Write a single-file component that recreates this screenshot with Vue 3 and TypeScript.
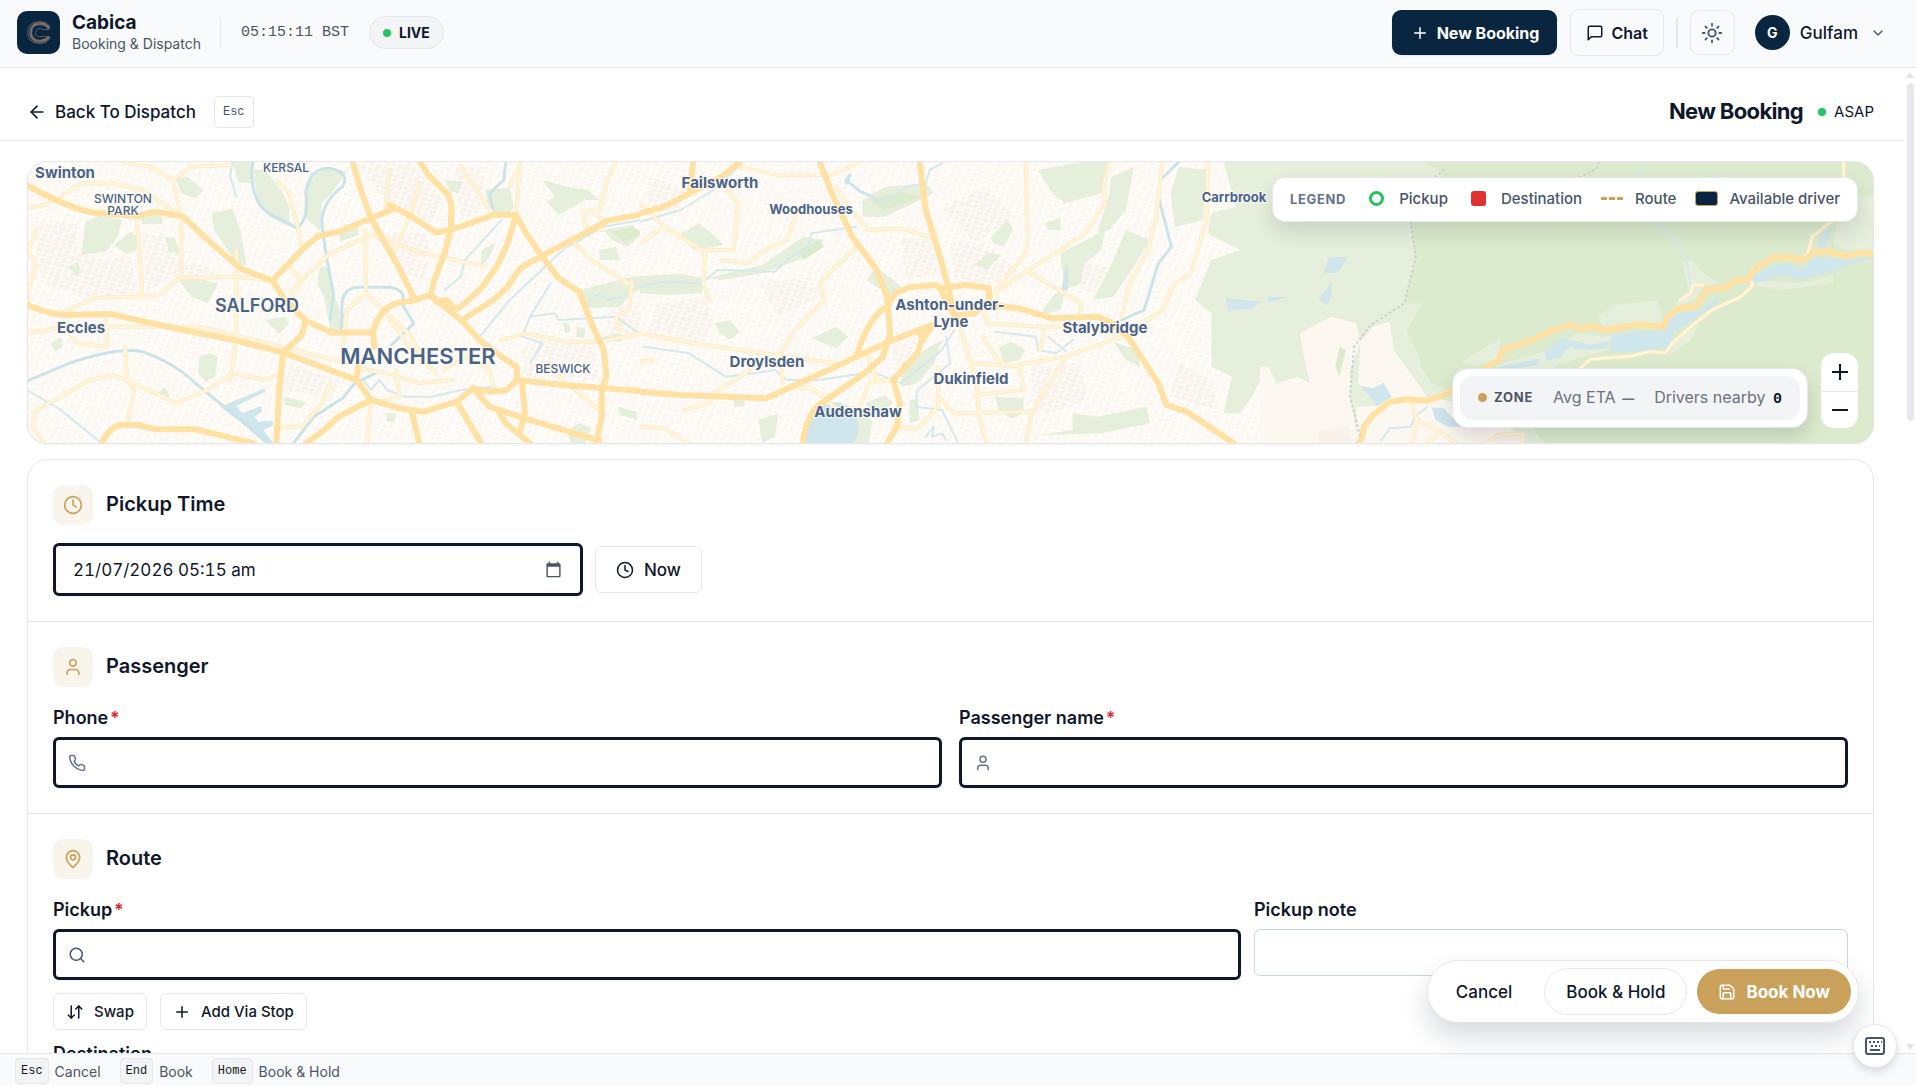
<script setup lang="ts">
import { ref } from 'vue'

interface Tile {
  x: number
  width: number
  land: string
  fields: string[]
  hills: string[]
  urban: string[]
  cream: string[]
  lakes: string[]
  rivers: string[]
  lanes: string[]
  minor: string[]
  major: string[]
  trails: string[]
}

interface Label {
  text: string
  x: number
  y: number
  size: 'xs' | 'sm' | 'md' | 'lg' | 'xl'
}

const pickupTime = ref('21/07/2026 05:15 am')
const phone = ref('')
const passenger = ref('')
const pickup = ref('')
const pickupNote = ref('')

const icons: Record<string, string[]> = {
  plus: ['M5 12h14', 'M12 5v14'],
  chat: ['M21 15a2 2 0 0 1-2 2H7l-4 4V5a2 2 0 0 1 2-2h14a2 2 0 0 1 2 2z'],
  sun: [
    'M12 8a4 4 0 1 0 0 8 4 4 0 0 0 0-8z',
    'M12 2v2', 'M12 20v2', 'M4.93 4.93l1.41 1.41', 'M17.66 17.66l1.41 1.41',
    'M2 12h2', 'M20 12h2', 'M6.34 17.66l-1.41 1.41', 'M19.07 4.93l-1.41 1.41'
  ],
  chevron: ['M6 9l6 6 6-6'],
  back: ['M12 19l-7-7 7-7', 'M19 12H5'],
  clock: ['M12 2a10 10 0 1 0 0 20 10 10 0 0 0 0-20z', 'M12 6v6l4 2'],
  user: ['M19 21v-2a4 4 0 0 0-4-4H9a4 4 0 0 0-4 4v2', 'M12 3a4 4 0 1 0 0 8 4 4 0 0 0 0-8z'],
  pin: [
    'M20 10c0 4.993-5.539 10.193-7.399 11.799a1 1 0 0 1-1.202 0C9.539 20.193 4 14.993 4 10a8 8 0 0 1 16 0',
    'M12 7a3 3 0 1 0 0 6 3 3 0 0 0 0-6z'
  ],
  phone: ['M22 16.92v3a2 2 0 0 1-2.18 2 19.79 19.79 0 0 1-8.63-3.07 19.5 19.5 0 0 1-6-6 19.79 19.79 0 0 1-3.07-8.67A2 2 0 0 1 4.11 2h3a2 2 0 0 1 2 1.72 12.84 12.84 0 0 0 .7 2.81 2 2 0 0 1-.45 2.11L8.09 9.91a16 16 0 0 0 6 6l1.27-1.27a2 2 0 0 1 2.11-.45 12.84 12.84 0 0 0 2.81.7A2 2 0 0 1 22 16.92z'],
  search: ['M11 3a8 8 0 1 0 0 16 8 8 0 0 0 0-16z', 'M21 21l-4.3-4.3'],
  swap: ['M3 16l4 4 4-4', 'M7 20V4', 'M21 8l-4-4-4 4', 'M17 4v16'],
  save: [
    'M15.2 3a2 2 0 0 1 1.4.6l3.8 3.8a2 2 0 0 1 .6 1.4V19a2 2 0 0 1-2 2H5a2 2 0 0 1-2-2V5a2 2 0 0 1 2-2z',
    'M17 21v-7a1 1 0 0 0-1-1H8a1 1 0 0 0-1 1v7',
    'M7 3v4a1 1 0 0 0 1 1h7'
  ]
}

const tiles: Tile[] = [
  {
    x: 20,
    width: 640,
    land: 'M0 0H1568V930H0Z',
    fields: [
      'M160 215L200 195 250 210 240 260 210 305 150 315Z',
      'M230 285L270 245 290 260 285 300 260 312Z',
      'M290 195L345 190 350 222 300 222Z',
      'M355 260L380 265 392 310 365 305Z',
      'M380 85L410 80 450 120 430 145 395 130Z',
      'M470 190L520 175 540 240 555 345 535 345 475 240Z',
      'M520 36L570 36 565 100 535 95Z',
      'M572 60L600 60 640 120 660 170 660 230 610 200 580 140Z',
      'M700 120Q715 55 760 50L800 65 770 120 740 160 735 240 695 200Z',
      'M735 350L755 350 768 430 790 500 785 540 760 540 745 440 728 400Z',
      'M780 250L830 232 828 255 785 275Z',
      'M388 390L430 385 485 400 460 460 420 440Z',
      'M600 510L650 500 660 520 635 550Z',
      'M120 350L140 335 150 365 138 380Z',
      'M75 580L100 560 105 590 85 605Z',
      'M440 620L465 610 485 620 478 680 455 695 436 670Z',
      'M645 740L700 755 690 775 650 765Z',
      'M1140 120L1200 112 1210 170 1200 190 1150 188Z',
      'M1280 90L1340 110 1390 120 1420 150 1385 150 1320 195 1290 155 1310 140Z',
      'M1430 240L1500 225 1525 250 1490 290 1450 270Z',
      'M1420 300L1460 290 1470 330 1420 330Z',
      'M1370 420L1500 380 1568 380 1568 410 1500 425 1470 470 1390 475Z',
      'M1400 570L1460 550 1480 560 1470 575Z',
      'M1465 770L1510 785 1512 810 1470 795Z',
      'M1370 820L1400 835 1385 880 1350 880 1340 840Z',
      'M1330 520L1345 520 1350 545 1335 548Z',
      'M1365 530L1385 535 1383 565 1362 560Z',
      'M1130 300L1165 280 1150 320 1130 350Z',
      'M895 790L920 790 918 815 900 815Z',
      'M340 730L352 712 368 735 350 752Z',
      'M1040 90L1085 95 1075 130 1055 125Z'
    ],
    hills: ['M1450 245L1500 232 1525 250 1480 275Z'],
    urban: [
      'M40 210L140 220 140 310 200 330 270 320 290 430 150 440 60 400 40 330Z',
      'M300 250L350 260 400 320 490 370 380 385 310 420Z',
      'M860 250L1000 250 1000 400 940 370Z',
      'M1280 560L1400 580 1420 690 1230 680 1230 600Z',
      'M820 40L960 40 1040 150 1000 220 900 160Z',
      'M1060 50L1140 50 1130 180 1080 210Z',
      'M1440 470L1560 450 1568 540 1440 560Z',
      'M650 640L800 690 760 740 650 720Z'
    ],
    cream: [],
    lakes: ['M490 770L600 715 600 726 530 768 545 790 590 768 594 784 575 800 583 815 620 812 620 826 596 840 622 880 600 880 540 815Z'],
    rivers: [
      'M570 36Q560 150 610 190L680 235Q710 200 700 130Q710 50 760 55Q810 70 790 110Q735 160 740 230L752 330 768 430 760 510',
      'M785 540L790 500Q780 412 830 412L910 412Q950 425 935 460L965 520 910 585',
      'M0 702L120 640Q240 590 300 605Q380 640 430 700L510 780 612 880',
      'M670 880L720 800 790 745 820 700 870 670',
      'M1190 36L1185 90 1150 130 1160 190'
    ],
    lanes: [
      'M0 708L100 780 200 880',
      'M520 36L515 80 530 140',
      'M1120 570L1200 450 1330 300 1430 230 1568 200',
      'M1250 500L1310 490 1320 510 1460 500 1568 595',
      'M1040 420L1080 380 1090 330 1120 290 1180 210',
      'M840 690L860 720 880 690 900 720 940 740 1010 740 1080 720 1160 710',
      'M1395 450L1420 430 1440 450 1480 440 1500 410 1568 400',
      'M1300 400L1250 500 1230 560 1280 580 1250 640'
    ],
    minor: [
      'M0 175Q70 170 100 140L150 100 230 100 300 120 390 195',
      'M250 36L320 50 375 90 395 200 395 380',
      'M375 90L420 50 515 45',
      'M285 200L295 340 300 440 340 435 390 385 530 380 618 392',
      'M20 480L20 420 40 350 20 300 40 240',
      'M100 490L180 445 240 440 300 440',
      'M210 492L215 590 140 580 110 530 0 555',
      'M215 530L440 530 640 590 800 640',
      'M258 590L262 690 280 720 262 820',
      'M40 780L100 740 170 690 230 675 280 700 350 740 380 760 460 720 520 670 600 690 640 670',
      'M40 780L30 830 60 880',
      'M530 300L530 570 515 690',
      'M845 240L848 430 800 480 790 610',
      'M848 430L900 490 960 560 990 640',
      'M655 345L690 390 665 430 680 500',
      'M690 390L760 310 870 250',
      'M630 90L660 130 680 230 690 300',
      'M905 60L895 180',
      'M870 260L990 310 1140 350',
      'M1200 110L1225 40 M1225 60L1215 195',
      'M1080 50L1120 120 1160 195',
      'M920 300L950 210 980 100',
      'M1350 270L1400 330 1490 400',
      'M1430 212L1400 180 1380 190 1385 230 1430 240',
      'M1180 570L1240 550 1340 575 1420 575 1568 540',
      'M1480 400L1500 400 1490 480 1460 500 1470 540',
      'M1040 660L1090 620 1150 660 1160 710',
      'M900 500L960 600 1020 670',
      'M920 660L930 740 880 755',
      'M830 655L900 670 980 700 1060 690',
      'M640 830L690 830 740 760 760 700',
      'M1430 790L1330 690 1290 640',
      'M860 750L850 880',
      'M1420 180L1440 90 1460 36'
    ],
    major: [
      'M0 95Q140 190 200 190L290 198 330 185 400 200 460 270 540 355 618 392 650 450 700 512 765 548 860 547',
      'M0 455Q60 490 110 495L220 492 400 540 530 572 645 608 820 688',
      'M200 880Q220 830 245 825L290 825 330 838 430 838 575 880',
      'M618 392L655 345 690 300 730 258 780 245 860 205 910 180',
      'M905 165L960 200 1020 248 1055 240 1160 195 1215 195 1240 250 1278 318 1320 385 1370 425 1400 520 1430 600 1437 680 1425 720 1425 800 1412 880',
      'M815 36L835 120 860 205 925 345 968 450',
      'M980 36L1000 75 1050 135 1057 170 1055 240 1040 310 1015 390 1005 440',
      'M1568 183L1440 212 1360 265 1278 318 1225 355 1195 410 1160 450 1090 505',
      'M1215 195L1195 280 1170 345 1130 415 1085 465 1065 480',
      'M968 450L1005 435 1040 470 1085 515 1130 575 1180 620 1217 650 1218 690 1190 722 1150 725 1110 715 1070 755 990 785 930 775 860 750 825 690 828 650',
      'M968 450L920 460Q880 480 865 545L868 590',
      'M1020 455L1045 450 1065 480',
      'M700 512L690 555 645 608 635 720 628 880',
      'M860 750L780 800 740 845 700 880',
      'M960 785L978 880',
      'M1070 755L1130 880',
      'M1110 715L1150 770 1235 805 1420 872',
      'M1217 690L1330 705 1425 713 1568 728',
      'M1230 695L1237 790 1225 840',
      'M1175 790L1190 820 1250 880'
    ],
    trails: []
  },
  {
    x: 640,
    width: 640,
    land: 'M0 0H1568V930H0Z',
    fields: [
      'M0 378L100 372 160 385 150 430 60 435 0 430Z',
      'M160 385L300 345 400 260 450 270 410 320 300 370 200 390Z',
      'M545 150L600 110 700 100 720 130 600 200 545 200Z',
      'M100 250L145 220 185 260 205 285 130 300Z',
      'M975 60L1080 36 1150 36 1130 130 1040 160 1010 130Z',
      'M1155 80L1210 50 1190 180 1150 240 1120 250 1150 130Z',
      'M1030 310L1140 240 1130 300 1090 340 1080 400 1040 420Z',
      'M1190 240L1250 270 1210 350 1160 440 1110 450 1160 330Z',
      'M1320 50L1390 60 1380 210 1310 230 1300 130Z',
      'M1430 36L1568 36 1568 640 1520 690 1500 740 1470 790 1430 790 1450 680 1400 650 1400 490 1360 450 1400 330 1470 300 1390 250 1400 190 1460 170Z',
      'M555 390L580 350 640 410 620 450 605 430Z',
      'M860 260L900 210 915 240 890 290 865 280Z',
      'M820 345L850 310 885 315 850 360Z',
      'M980 495L1010 440 1045 400 1030 480Z',
      'M880 590L910 575 945 600 930 630 890 640Z',
      'M870 740L940 745 940 790 910 805 880 785Z',
      'M980 855L1060 840 1060 790 1120 800 1240 770 1250 820 1130 850Z',
      'M550 760L600 735 620 760 580 795Z',
      'M535 790L570 810 560 880 520 880Z',
      'M1160 575L1220 600 1225 650 1190 630Z',
      'M185 520L220 510 245 545 220 570 195 550Z',
      'M420 565L480 530 510 560 480 595Z',
      'M640 640L740 570 720 640 680 700 640 710Z',
      'M290 810L340 790 330 860 300 880Z',
      'M990 220L1030 205 1030 240 1000 240Z',
      'M230 745L258 740 255 770 230 770Z',
      'M660 750L680 750 685 810 660 820Z'
    ],
    hills: ['M560 150L640 125 690 140 600 180Z', 'M390 300L440 270 450 290 400 330Z'],
    urban: [
      'M40 460L160 440 180 520 160 580 20 540Z',
      'M640 260L720 270 730 370 650 390Z',
      'M760 280L850 280 930 370 860 400 770 390Z',
      'M960 650L1080 640 1100 750 1000 790 960 760Z',
      'M1320 640L1400 690 1420 780 1300 740Z',
      'M740 170L850 110 920 200 820 280Z',
      'M20 80L120 120 90 200 20 170Z',
      'M290 400L420 380 440 440 340 500Z',
      'M620 590L680 560 660 620 620 660Z',
      'M1090 340L1150 350 1110 430 1080 420Z'
    ],
    cream: [],
    lakes: [
      'M450 760Q510 745 530 800Q545 850 520 880L400 880Q410 790 450 760Z',
      'M1435 445L1522 455 1500 475 1440 482Z',
      'M1535 440L1568 435 1568 458Z',
      'M1045 340L1050 380 1048 420 1032 420Z'
    ],
    rivers: [
      'M1320 36L1275 90 1270 140 1302 290 1270 340 1235 480 1180 510',
      'M505 100L515 75 505 90 540 125 570 140'
    ],
    lanes: [
      'M0 410L60 395 150 400 190 360 330 365 370 320 410 300 420 250 530 230',
      'M10 590L120 610 210 680 280 670 330 660 360 690 440 690 570 665 640 700 740 600 770 540',
      'M545 130L600 155 650 110 700 100 710 60 740 40',
      'M750 560L760 640 680 720 675 770 740 780 780 880',
      'M870 545L970 560 975 600 1020 610 1060 570',
      'M1000 560L1045 605',
      'M245 45L180 120 100 180 0 215',
      'M700 860L720 830 715 860 740 850 750 870'
    ],
    minor: [
      'M0 550L130 580 300 610 480 640',
      'M1150 36L1135 110 1140 160 1090 250 1030 300 940 370 860 440',
      'M1280 36L1265 200 1245 300 1200 400 1180 500',
      'M1390 36L1390 200 1350 370 1310 400 1280 480 1180 560 1040 620',
      'M945 36L950 300 860 440',
      'M945 360L1080 460 1080 500',
      'M0 160L60 230 150 300 230 300 240 160 200 100',
      'M60 230L0 280',
      'M160 300L155 400 170 450',
      'M200 330L260 340 320 290 360 270 390 170',
      'M240 50L340 76 470 75 540 36',
      'M480 110L530 200 560 240 640 235 720 265',
      'M530 290L480 350 440 400 450 450 380 540 345 610 350 700',
      'M780 510L800 600 825 700 830 800 850 880',
      'M555 610L580 690 620 690',
      'M730 740L770 790 960 785',
      'M1040 625L960 790 945 880',
      'M840 470L850 520 980 530 1080 530 1190 560',
      'M820 640L930 650 940 720 820 735',
      'M840 560L870 620 900 650 1040 620',
      'M0 635L30 630M0 830L60 835 120 880',
      'M110 780L170 760 180 730 270 660 290 620',
      'M370 715L420 715 450 740',
      'M450 750L490 780 540 770 560 700 610 690',
      'M620 830L680 835 730 770 730 650',
      'M990 540L980 600'
    ],
    major: [
      'M0 190L60 170 130 125 200 80 245 36',
      'M130 36L122 125',
      'M440 36L470 130 520 260 580 360 605 440 613 550 595 620 550 670 450 755Q410 780 398 880',
      'M685 36L700 180 730 300 755 410 770 495',
      'M0 725L100 735 310 745 380 705 480 650 530 620 610 575 715 525',
      'M530 620Q560 500 605 470L625 430 660 412 725 405 735 415 800 405 855 415 855 450 820 490 770 497 745 440 735 412',
      'M855 465L930 475 1010 505 1120 500 1150 515 1195 560 1270 700 1290 765 1340 785 1455 880',
      'M715 530L690 570 680 610 620 690 637 760 630 830 605 880',
      'M680 540L695 570'
    ],
    trails: []
  },
  {
    x: 1260,
    width: 656,
    land: '',
    fields: [
      'M0 36L390 36 440 70 400 130 360 215 372 320 345 460 390 460 350 540 410 700 470 730 650 830 680 880 0 880Z',
      'M480 640L540 590 575 570 570 620 520 650Z',
      'M580 640L690 600 760 550 840 560 830 600 720 640 700 655 560 655Z',
      'M805 500L850 465 950 450 960 490 960 520 820 530Z',
      'M1010 340L1030 330 1060 370 1100 400 1060 410 1040 450 990 470 1025 420Z',
      'M1180 390L1290 400 1370 375 1370 400 1250 420 1190 410Z',
      'M1395 120L1440 140 1468 140 1468 300 1400 300 1370 280Z',
      'M990 570L1050 520 1030 570 975 620Z'
    ],
    hills: ['M190 590L205 600 190 680 180 650Z', 'M380 560L420 490 455 690 410 695 385 650Z'],
    urban: ['M140 840L210 830 220 880 140 880Z', 'M560 850L630 850 630 880 560 880Z'],
    cream: [
      'M0 650L20 650 40 700 90 680 120 700 110 650 95 550 170 500 230 520 240 575 215 660 215 740 235 880 0 880Z',
      'M240 575L270 530 310 515 320 600 400 740 480 760 620 850 630 880 235 880 230 770 280 768 235 700Z'
    ],
    lakes: [
      'M840 556L900 545 965 540 990 495 1050 480 1100 437 1095 460 1045 500 990 545 980 590 920 605 838 605Z',
      'M680 605L720 565 760 575 790 585 835 572 830 595 770 600 740 590 715 625 685 632Z',
      'M1180 375L1230 345 1270 338 1290 365 1320 322 1400 330 1466 320 1340 375 1290 388 1250 375 1175 402Z',
      'M560 655L590 645 670 625 660 645 600 658Z',
      'M165 322L212 320 185 368 150 370Z',
      'M170 398L172 435 158 468 140 445Z',
      'M20 440L68 440 20 458Z',
      'M240 708L270 715 295 698 315 740 280 768Z',
      'M410 772L440 775 480 830 450 830 420 810Z',
      'M1340 255L1370 225 1350 295 1335 295Z'
    ],
    rivers: [],
    lanes: ['M945 218L990 270 1020 330 1030 410', 'M925 36L905 76', 'M400 770L370 800 360 830 310 835 290 870'],
    minor: [
      'M1180 355L1170 385 1178 405 1150 440 1080 480 1040 520 985 580 970 608 930 605 890 618 790 628 765 655',
      'M1395 36L1395 85',
      'M1365 215L1320 260 1310 310 1298 330',
      'M1060 405L1035 405 1030 430 1005 450',
      'M360 750L375 810 430 845 470 880',
      'M375 810L365 880',
      'M540 880L570 855 630 850 625 880',
      'M400 880L430 845'
    ],
    major: [
      'M235 880Q245 870 248 830L270 795 310 755 350 748 400 752 440 735 470 710 530 660 570 630 580 600 640 575 700 540 740 525 770 535 795 528 825 540 900 523 965 530 975 500 1000 475 1040 470 1070 418 1110 415 1140 390 1165 390 1190 350 1230 322 1260 322 1300 330 1325 305 1360 305 1400 318 1440 308 1480 315'
    ],
    trails: [
      'M360 215L372 320 345 460 265 525 225 590 215 740 240 860',
      'M810 36L805 55 760 85',
      'M440 60L420 80'
    ]
  }
]

const labels: Label[] = [
  { text: 'Swinton', x: 65, y: 178, size: 'md' },
  { text: 'SWINTON', x: 123, y: 203, size: 'xs' },
  { text: 'PARK', x: 123, y: 215, size: 'xs' },
  { text: 'KERSAL', x: 286, y: 172, size: 'xs' },
  { text: 'SALFORD', x: 257, y: 312, size: 'lg' },
  { text: 'Eccles', x: 81, y: 333, size: 'md' },
  { text: 'MANCHESTER', x: 418, y: 364, size: 'xl' },
  { text: 'BESWICK', x: 563, y: 373, size: 'xs' },
  { text: 'Failsworth', x: 720, y: 188, size: 'md' },
  { text: 'Woodhouses', x: 811, y: 214, size: 'sm' },
  { text: 'Ashton-under-', x: 950, y: 310, size: 'md' },
  { text: 'Lyne', x: 951, y: 327, size: 'md' },
  { text: 'Stalybridge', x: 1105, y: 333, size: 'md' },
  { text: 'Droylsden', x: 767, y: 367, size: 'md' },
  { text: 'Dukinfield', x: 971, y: 384, size: 'md' },
  { text: 'Audenshaw', x: 858, y: 417, size: 'md' },
  { text: 'Carrbrook', x: 1234, y: 202, size: 'sm' }
]

const shortcuts = [
  { key: 'Esc', label: 'Cancel' },
  { key: 'End', label: 'Book' },
  { key: 'Home', label: 'Book & Hold' }
]
</script>

<template>
  <div class="app">
    <header class="topbar">
      <div class="logo">
        <svg viewBox="0 0 44 44" aria-hidden="true">
          <path class="c-outer" d="M33 16V15Q31 11 25 11H21Q11 12 11 22T21 33H26Q32 32 33 28" />
          <path class="c-body" d="M33 18C31 14 27 13 23 13 17 13 14 17 14 22S17 31 23 31C27 31 31 30 33 26" />
          <path class="c-inner" d="M33 19H27Q20 16 19 22T27 26H33" />
          <path class="c-spark" d="M17 15l4-2M23 12l5 1M16 26l4 4M25 30l5-2M29 15l3 2" />
        </svg>
      </div>
      <div class="brand">
        <strong>Cabica</strong>
        <span>Booking &amp; Dispatch</span>
      </div>
      <i class="rule"></i>
      <time class="time">05:15:11 BST</time>
      <span class="live"><i class="dot"></i>LIVE</span>
      <div class="actions">
        <button class="btn-new" type="button">
          <svg class="icon i18" viewBox="0 0 24 24"><path v-for="d in icons.plus" :key="d" :d="d" /></svg>New Booking
        </button>
        <button class="btn-chat" type="button">
          <svg class="icon i18" viewBox="0 0 24 24"><path v-for="d in icons.chat" :key="d" :d="d" /></svg>Chat
        </button>
        <i class="rule thick"></i>
        <button class="btn-sun" type="button" aria-label="Theme">
          <svg class="icon i22" viewBox="0 0 24 24"><path v-for="d in icons.sun" :key="d" :d="d" /></svg>
        </button>
        <button class="account" type="button">
          <span class="avatar">G</span>
          <span>Gulfam</span>
          <svg class="icon i16" viewBox="0 0 24 24"><path v-for="d in icons.chevron" :key="d" :d="d" /></svg>
        </button>
      </div>
    </header>

    <main class="main">
      <div class="scroller">
        <div class="pagehead">
          <a class="back" href="#">
            <svg class="icon i20" viewBox="0 0 24 24"><path v-for="d in icons.back" :key="d" :d="d" /></svg>Back To Dispatch
          </a>
          <kbd class="esc">Esc</kbd>
          <h1>New Booking</h1>
          <span class="asap"><i class="dot"></i>ASAP</span>
        </div>

        <div class="body">
          <section class="map" aria-label="Map">
            <svg class="canvas" viewBox="28 162 1845 281" preserveAspectRatio="xMinYMin slice">
              <defs>
                <pattern id="streets" width="34" height="30" patternUnits="userSpaceOnUse" patternTransform="rotate(18)">
                  <path d="M0 6H34M0 21H18M10 0V30M26 6V30M18 21L26 14" fill="none" stroke="#fff" stroke-width="3" />
                </pattern>
              </defs>
              <rect x="0" y="150" width="1916" height="310" fill="#dcebcd" />
              <svg
                v-for="tile in tiles" :key="tile.x" :x="tile.x" y="150" :width="tile.width" height="310"
                viewBox="0 0 1568 930" preserveAspectRatio="none"
              >
                <path v-if="tile.land" class="land" :d="tile.land" />
                <path v-if="!tile.land" class="field" :d="tile.fields[0]" />
                <path v-for="d in tile.cream" :key="d" class="land" :d="d" />
                <path v-for="d in tile.urban" :key="d" class="urban" :d="d" />
                <path v-if="tile.land" d="M0 0H1568V930H0Z" fill="url(#streets)" />
                <path v-for="d in tile.land ? tile.fields : tile.fields.slice(1)" :key="d" class="field" :d="d" />
                <path v-for="d in tile.hills" :key="d" class="hill" :d="d" />
                <path v-for="d in tile.lakes" :key="d" class="lake" :d="d" />
                <path v-for="d in tile.rivers" :key="d" class="river" :d="d" />
                <path v-for="d in tile.lanes" :key="d" class="lane" :d="d" />
                <path v-for="d in tile.minor" :key="d" class="minor" :d="d" />
                <path v-for="d in tile.minor" :key="d + 'c'" class="minor-core" :d="d" />
                <path v-for="d in tile.major" :key="d" class="major" :d="d" />
                <path v-for="d in tile.trails" :key="d" class="trail" :d="d" />
              </svg>
              <text
                v-for="label in labels" :key="label.text" class="place" :class="label.size"
                :x="label.x" :y="label.y"
              >{{ label.text }}</text>
            </svg>

            <div class="legend">
              <b>LEGEND</b>
              <span><i class="k-pickup"></i>Pickup</span>
              <span><i class="k-dest"></i>Destination</span>
              <span><i class="k-route"></i>Route</span>
              <span><i class="k-driver"></i>Available driver</span>
            </div>

            <div class="corner">
              <div class="zone">
                <div class="zone-in">
                  <i class="dot"></i>
                  <b>ZONE</b>
                  <span>Avg ETA <em>—</em></span>
                  <span>Drivers nearby <strong>0</strong></span>
                </div>
              </div>
              <div class="zoom">
                <button type="button" aria-label="Zoom in"><svg viewBox="0 0 20 20"><path d="M2 10H18M10 2V18" /></svg></button>
                <button type="button" aria-label="Zoom out"><svg viewBox="0 0 20 20"><path d="M2 10H18" /></svg></button>
              </div>
            </div>
          </section>

          <form class="card" @submit.prevent>
            <section class="block first">
              <div class="block-head">
                <span class="tile"><svg class="icon i20" viewBox="0 0 24 24"><path v-for="d in icons.clock" :key="d" :d="d" /></svg></span>
                <h2>Pickup Time</h2>
              </div>
              <div class="time-row">
                <div class="control when">
                  <input v-model="pickupTime" type="text" aria-label="Pickup time" />
                  <svg class="calendar" viewBox="0 0 24 24" aria-hidden="true">
                    <path d="M20 3h-1V1h-2v2H7V1H5v2H4c-1.1 0-2 .9-2 2v16c0 1.1.9 2 2 2h16c1.1 0 2-.9 2-2V5c0-1.1-.9-2-2-2zm0 18H4V8h16v13z" />
                  </svg>
                </div>
                <button class="btn-now" type="button">
                  <svg class="icon i18" viewBox="0 0 24 24"><path v-for="d in icons.clock" :key="d" :d="d" /></svg>Now
                </button>
              </div>
            </section>

            <section class="block">
              <div class="block-head">
                <span class="tile"><svg class="icon i20" viewBox="0 0 24 24"><path v-for="d in icons.user" :key="d" :d="d" /></svg></span>
                <h2>Passenger</h2>
              </div>
              <div class="grid two">
                <div class="field-box">
                  <label for="phone">Phone<sup>*</sup></label>
                  <div class="control">
                    <svg class="icon i18" viewBox="0 0 24 24"><path v-for="d in icons.phone" :key="d" :d="d" /></svg>
                    <input id="phone" v-model="phone" type="tel" />
                  </div>
                </div>
                <div class="field-box">
                  <label for="name">Passenger name<sup>*</sup></label>
                  <div class="control">
                    <svg class="icon i18" viewBox="0 0 24 24"><path v-for="d in icons.user" :key="d" :d="d" /></svg>
                    <input id="name" v-model="passenger" type="text" />
                  </div>
                </div>
              </div>
            </section>

            <section class="block">
              <div class="block-head">
                <span class="tile"><svg class="icon i20" viewBox="0 0 24 24"><path v-for="d in icons.pin" :key="d" :d="d" /></svg></span>
                <h2>Route</h2>
              </div>
              <div class="grid route">
                <div class="field-box">
                  <label for="pickup">Pickup<sup>*</sup></label>
                  <div class="control search">
                    <svg class="icon i18" viewBox="0 0 24 24"><path v-for="d in icons.search" :key="d" :d="d" /></svg>
                    <input id="pickup" v-model="pickup" type="text" />
                  </div>
                </div>
                <div class="field-box">
                  <label for="note">Pickup note</label>
                  <input id="note" v-model="pickupNote" class="plain" type="text" />
                </div>
              </div>
              <div class="stops">
                <button type="button">
                  <svg class="icon i18" viewBox="0 0 24 24"><path v-for="d in icons.swap" :key="d" :d="d" /></svg>Swap
                </button>
                <button type="button">
                  <svg class="icon i18" viewBox="0 0 24 24"><path v-for="d in icons.plus" :key="d" :d="d" /></svg>Add Via Stop
                </button>
              </div>
              <div class="field-box">
                <label for="destination">Destination</label>
                <div class="control search"><input id="destination" type="text" /></div>
              </div>
            </section>
          </form>
        </div>
      </div>
      <div class="scrollbar" aria-hidden="true">
        <i class="up"></i>
        <i class="thumb"></i>
        <i class="down"></i>
      </div>
    </main>

    <footer class="hints">
      <span v-for="item in shortcuts" :key="item.key"><kbd>{{ item.key }}</kbd>{{ item.label }}</span>
    </footer>

    <div class="floating">
      <button class="f-cancel" type="button">Cancel</button>
      <button class="f-hold" type="button">Book &amp; Hold</button>
      <button class="f-now" type="button">
        <svg class="icon i18" viewBox="0 0 24 24"><path v-for="d in icons.save" :key="d" :d="d" /></svg>Book Now
      </button>
    </div>

    <button class="keyboard" type="button" aria-label="Keyboard shortcuts">
      <svg viewBox="0 0 20 18">
        <rect x="1" y="1" width="18" height="16" rx="2" />
        <path d="M4 5h2M8 5h2M12 5h2M16 5h1M6 9h2M10 9h2M14 9h1M5 13h10" />
      </svg>
    </button>
  </div>
</template>

<style>
body {
  margin: 0;
  overflow: hidden;
}
</style>

<style scoped>
* {
  box-sizing: border-box;
}

.app {
  position: relative;
  display: flex;
  flex-direction: column;
  height: 100vh;
  overflow: hidden;
  background: #fff;
  color: #0f172a;
  font-family: Inter, "Liberation Sans", sans-serif;
  font-size: 16px;
}

button,
input {
  font: inherit;
  color: inherit;
}

button {
  display: inline-flex;
  align-items: center;
  justify-content: center;
  margin: 0;
  padding: 0;
  border: 0;
  background: none;
  white-space: nowrap;
}

kbd,
.time {
  font-family: "Liberation Mono", monospace;
}

.icon {
  flex: none;
  fill: none;
  stroke: currentColor;
  stroke-width: 2;
  stroke-linecap: round;
  stroke-linejoin: round;
}

.i16 { width: 16px; height: 16px; }
.i18 { width: 18px; height: 18px; }
.i20 { width: 20px; height: 20px; }
.i22 { width: 22px; height: 22px; }

.dot {
  flex: none;
  width: 8px;
  height: 8px;
  border-radius: 50%;
  background: #22c55e;
}

/* top bar */
.topbar {
  flex: none;
  display: flex;
  align-items: center;
  height: 68px;
  padding: 0 30px 2px 17px;
  border-bottom: 1px solid #e5e7eb;
  background: #f9fafc;
}

.logo {
  width: 43px;
  height: 43px;
  border-radius: 10px;
  background: #0a2540;
}

.logo svg {
  display: block;
  width: 43px;
  height: 43px;
  fill: none;
}

.c-outer { stroke: #5d6673; }
.c-body { stroke: #6e6a69; stroke-width: 3; }
.c-inner { stroke: #56606d; }
.c-spark { stroke: #c4682f; }

.brand {
  display: flex;
  flex-direction: column;
  margin-left: 12px;
}

.brand strong {
  font-size: 19px;
  line-height: 22px;
  font-weight: 700;
}

.brand span {
  font-size: 14px;
  line-height: 19px;
  color: #4b5563;
}

.rule {
  width: 1px;
  height: 30px;
  margin: 0 20px 0 19px;
  background: #e5e7eb;
}

.rule.thick {
  width: 2px;
  margin: 0 12px;
}

.time {
  font-size: 15px;
  color: #4b5563;
}

.live {
  display: flex;
  align-items: center;
  gap: 8px;
  height: 33px;
  margin-left: 20px;
  padding: 0 13px;
  border: 1px solid #e5e7eb;
  border-radius: 17px;
  background: #f3f4f6;
  font-size: 14px;
  font-weight: 700;
}

.actions {
  display: flex;
  align-items: center;
  margin-left: auto;
}

.btn-new {
  gap: 8px;
  height: 45px;
  padding: 0 18px 0 19px;
  border-radius: 9px;
  background: #0a2540;
  box-shadow: 0 1px 2px rgb(0 0 0 / 8%);
  color: #fff;
  font-weight: 700;
}

.btn-chat {
  gap: 7px;
  height: 47px;
  margin-left: 13px;
  padding: 0 15px;
  border: 1px solid #e5e7eb;
  border-radius: 9px;
  font-weight: 600;
}

.btn-sun {
  width: 45px;
  height: 45px;
  border: 1px solid #e5e7eb;
  border-radius: 9px;
  color: #475569;
}

.account {
  margin-left: 20px;
  gap: 10px;
  font-size: 17px;
  font-weight: 500;
}

.account .icon {
  margin-left: 2px;
  color: #475569;
}

.avatar {
  display: grid;
  place-items: center;
  width: 35px;
  height: 35px;
  border-radius: 50%;
  background: #0a2540;
  color: #fff;
  font-size: 14px;
  font-weight: 700;
}

/* scrolling area */
.main {
  flex: 1;
  display: flex;
  min-height: 0;
}

.scroller {
  flex: 1;
  min-width: 0;
  overflow: hidden;
}

.scrollbar {
  flex: none;
  display: flex;
  flex-direction: column;
  align-items: center;
  width: 12px;
  padding: 4px 0 3px;
}

.scrollbar .up,
.scrollbar .down {
  border: 4px solid transparent;
}

.scrollbar .up {
  border-top: 0;
  border-bottom: 6px solid #e2e4e8;
}

.scrollbar .down {
  margin-top: auto;
  border-bottom: 0;
  border-top: 6px solid #e2e4e8;
}

.scrollbar .thumb {
  width: 7px;
  height: calc(34% + 5px);
  margin-top: 5px;
  border-radius: 4px;
  background: #e5e7eb;
}

.pagehead {
  display: flex;
  align-items: center;
  height: 73px;
  padding: 15px 30px 0 27px;
  border-bottom: 1px solid #e5e7eb;
}

.back {
  display: flex;
  align-items: center;
  gap: 8px;
  color: #0f172a;
  font-size: 17px;
  font-weight: 500;
  text-decoration: none;
}

.esc {
  margin-left: 18px;
  padding: 0 8px;
  border: 1px solid #e5e7eb;
  border-radius: 4px;
  color: #475569;
  font-size: 12px;
  line-height: 30px;
}

h1 {
  margin: 0 0 2px auto;
  font-size: 22px;
  line-height: 28px;
  font-weight: 700;
  letter-spacing: -0.03em;
}

.asap {
  display: flex;
  align-items: center;
  gap: 8px;
  margin-left: 15px;
  font-size: 15px;
}

.body {
  display: flex;
  flex-direction: column;
  gap: 15px;
  padding: 20px 30px 0 27px;
}

/* map */
.map {
  position: relative;
  height: 283px;
  border: 1px solid #e5e7eb;
  border-radius: 20px;
  background: #dcebcd;
  box-shadow: 0 1px 2px rgb(0 0 0 / 5%);
  overflow: hidden;
}

.canvas {
  display: block;
  width: 100%;
  height: 281px;
}

.land { fill: #fcf8f1; }
.urban { fill: #f8f2ea; }
.field { fill: #e6efdb; }
.hill { fill: #dcebcd; }
.lake { fill: #cfe6ec; }

.river,
.lane,
.minor,
.minor-core,
.major,
.trail {
  fill: none;
  stroke-linejoin: round;
  stroke-linecap: round;
  vector-effect: non-scaling-stroke;
}

.river { stroke: #cbe4ea; stroke-width: 3; }
.lane { stroke: #d5e9ee; stroke-width: 2; }
.minor { stroke: #feecc2; stroke-width: 4; }
.minor-core { stroke: #fff6df; stroke-width: 2; }
.major { stroke: #ffe2a3; stroke-width: 6; }
.trail { stroke: #cdd3cf; stroke-width: 2; stroke-dasharray: 1 4; }

.place {
  fill: #4a6387;
  font-weight: 700;
  text-anchor: middle;
  paint-order: stroke;
  stroke: rgb(255 255 255 / 70%);
  stroke-width: 2px;
}

.place.xs { font-size: 12px; font-weight: 500; }
.place.sm { font-size: 13px; }
.place.md { font-size: 15px; }
.place.lg { font-size: 18px; font-weight: 600; }
.place.xl { font-size: 22px; font-weight: 600; }

.legend {
  position: absolute;
  top: 15px;
  right: 15px;
  display: flex;
  align-items: center;
  height: 45px;
  padding: 0 17px 2px;
  border: 1px solid #e5e7eb;
  border-radius: 13px;
  background: #fff;
  box-shadow: 0 10px 20px rgb(15 23 42 / 12%);
  color: #475569;
  font-size: 15px;
  font-weight: 500;
  gap: 19px;
}

.legend b {
  color: #64748b;
  font-size: 13px;
  font-weight: 700;
  letter-spacing: 0.05em;
}

.legend span {
  display: flex;
  align-items: center;
  gap: 11px;
}

.legend i {
  flex: none;
}

.k-pickup,
.k-dest {
  width: 15px;
  height: 15px;
  margin: 0 4px;
}

.k-pickup {
  border: 3px solid #22c55e;
  border-radius: 50%;
}

.k-dest {
  border-radius: 3px;
  background: #e03131;
}

.k-route {
  width: 23px;
  height: 3px;
  background: repeating-linear-gradient(90deg, #c9a15a 0 6px, transparent 6px 8px);
}

.k-driver {
  width: 23px;
  height: 15px;
  border: 1px solid #c9a15a;
  border-radius: 3px;
  background: #0a2540;
}

.corner {
  position: absolute;
  right: 15px;
  bottom: 15px;
  display: flex;
  align-items: flex-end;
  gap: 13px;
}

.zone {
  padding: 7px;
  border: 1px solid #e5e7eb;
  border-radius: 16px;
  background: #fff;
  box-shadow: 0 10px 20px rgb(15 23 42 / 14%);
}

.zone-in {
  display: flex;
  align-items: center;
  height: 44px;
  padding: 0 18px 2px;
  border-radius: 14px;
  background: #f3f4f6;
  color: #6b7280;
  font-size: 16px;
}

.zone .dot {
  width: 9px;
  height: 9px;
  background: #c9a15a;
}

.zone b {
  margin-left: 7px;
  color: #4b5563;
  font-size: 13px;
  font-weight: 700;
  letter-spacing: 0.06em;
}

.zone span {
  margin-left: 20px;
}

.zone em {
  margin-left: 2px;
  font-size: 12px;
  font-style: normal;
  font-weight: 700;
}

.zone strong {
  margin-left: 3px;
  color: #0f172a;
  font-family: "Liberation Mono", monospace;
  font-size: 15px;
}

.zoom {
  display: flex;
  flex-direction: column;
  width: 37px;
  border-radius: 13px;
  background: #fff;
}

.zoom button {
  height: 38px;
}

.zoom button + button {
  height: 37px;
  border-top: 1px solid #e5e7eb;
}

.zoom svg {
  width: 20px;
  height: 20px;
  fill: none;
  stroke: #0f172a;
  stroke-width: 2;
}

/* form card */
.card {
  border: 1px solid #e5e7eb;
  border-radius: 20px;
  background: #fff;
}

.block {
  padding: 25px;
}

.block + .block {
  border-top: 1px solid #e5e7eb;
}

.block-head {
  display: flex;
  align-items: center;
  gap: 13px;
  margin-bottom: 20px;
}

.first .block-head {
  margin-bottom: 18px;
}

.tile {
  display: grid;
  place-items: center;
  width: 40px;
  height: 40px;
  border-radius: 10px;
  background: #faf5ec;
  color: #c9a15a;
}

h2 {
  margin: 0 0 2px;
  font-size: 20px;
  line-height: 28px;
  font-weight: 600;
}

.time-row {
  display: flex;
  align-items: center;
  gap: 12px;
}

.control {
  display: flex;
  align-items: center;
  gap: 10px;
  height: 51px;
  padding: 0 12px;
  border: 3px solid #0f172a;
  border-radius: 6px;
  background: #fff;
  box-shadow: 0 1px 2px rgb(0 0 0 / 5%);
  color: #64748b;
}

.control input {
  flex: 1;
  min-width: 0;
  padding: 0;
  border: 0;
  outline: 0;
  background: none;
  color: #0f172a;
  font-size: 17px;
}

.control.when {
  width: 530px;
  height: 53px;
  padding: 0 18px 0 17px;
}

.when input {
  font-variant-numeric: tabular-nums;
}

.calendar {
  width: 17px;
  height: 17px;
  fill: #4b5563;
}

.control.search {
  color: #475569;
}

.btn-now {
  gap: 10px;
  height: 47px;
  padding: 0 20px;
  border: 1px solid #e5e7eb;
  border-radius: 6px;
  font-size: 17px;
  font-weight: 500;
}

.grid {
  display: grid;
}

.grid.two {
  grid-template-columns: 1fr 1fr;
  gap: 17px;
}

.grid.route {
  grid-template-columns: 2fr 1fr;
  gap: 13px;
}

.field-box {
  display: flex;
  flex-direction: column;
  gap: 8px;
}

label {
  font-size: 18px;
  line-height: 22px;
  font-weight: 600;
}

label sup {
  margin-left: 2px;
  color: #dc2626;
  font-size: 17px;
  line-height: 0;
  vertical-align: baseline;
}

.plain {
  height: 47px;
  padding: 0 12px;
  border: 1px solid #cbd5e1;
  border-radius: 6px;
  outline: 0;
  background: #fff;
}

.stops {
  display: flex;
  gap: 13px;
  margin: 13px 0;
}

.stops button {
  gap: 10px;
  height: 37px;
  padding: 0 12px;
  border: 1px solid #e5e7eb;
  border-radius: 6px;
  font-size: 15px;
  font-weight: 500;
}

/* footer hints */
.hints {
  flex: none;
  display: flex;
  align-items: center;
  gap: 19px;
  height: 33px;
  padding: 2px 15px 0;
  border-top: 1px solid #e5e7eb;
  background: #f9fafc;
  color: #4b5563;
  font-size: 14px;
}

.hints span {
  display: flex;
  align-items: center;
  gap: 6px;
}

.hints kbd {
  padding: 0 5px;
  border: 1px solid #e5e7eb;
  border-radius: 4px;
  background: #f3f4f6;
  color: #0f172a;
  font-size: 12px;
  line-height: 24px;
}

/* floating actions */
.floating {
  position: absolute;
  right: 57px;
  bottom: 63px;
  display: flex;
  align-items: center;
  height: 63px;
  padding: 0 7px 0 28px;
  border: 1px solid #e5e7eb;
  border-radius: 32px;
  background: #fff;
  box-shadow: 0 14px 28px rgb(15 23 42 / 16%);
  font-size: 17px;
}

.f-cancel {
  font-weight: 500;
}

.f-hold {
  height: 47px;
  margin-left: 32px;
  padding: 0 21px;
  border: 1px solid #e5e7eb;
  border-radius: 24px;
  font-weight: 500;
}

.f-now {
  gap: 10px;
  height: 45px;
  margin-left: 10px;
  padding: 0 21px;
  border-radius: 23px;
  background: #c9a15a;
  color: #fff;
  font-weight: 700;
}

.keyboard {
  position: absolute;
  right: 19px;
  bottom: 18px;
  width: 44px;
  height: 44px;
  border: 1px solid #e5e7eb;
  border-radius: 50%;
  background: #fff;
  box-shadow: 0 4px 8px rgb(15 23 42 / 14%);
}

.keyboard svg {
  width: 20px;
  height: 18px;
  fill: none;
  stroke: #475569;
  stroke-width: 2;
}
</style>
